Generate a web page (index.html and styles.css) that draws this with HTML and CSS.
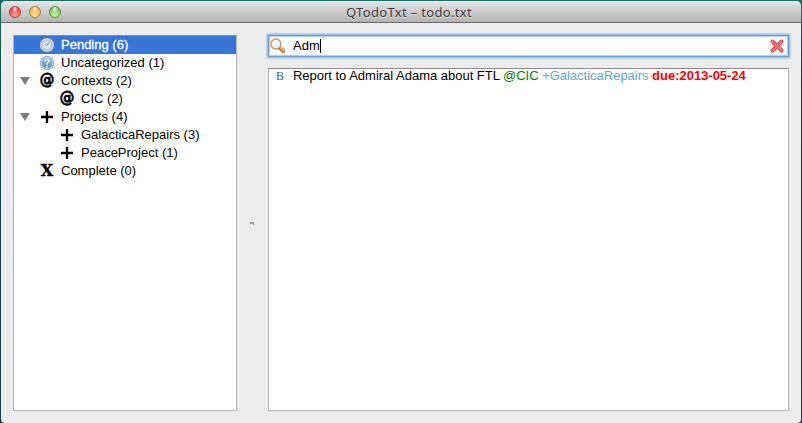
FILE: index.html
```html
<!DOCTYPE html>
<html lang="en">
<head>
<meta charset="utf-8">
<title>QTodoTxt – todo.txt</title>
<link rel="stylesheet" href="styles.css">
</head>
<body>
<svg class="defs" width="0" height="0">
  <defs>
    <linearGradient id="blue" x1="0" y1="0" x2="0" y2="1"><stop offset="0" stop-color="#9fc0e6"/><stop offset="1" stop-color="#5486c2"/></linearGradient>
    <symbol id="plus" viewBox="0 0 16 16"><path d="M8 2v12M2 8h12" stroke="#000" stroke-width="2.3" fill="none"/></symbol>
  </defs>
</svg>
<div class="window">
  <header class="titlebar">
    <div class="lights"><i class="light red"></i><i class="light amber"></i><i class="light green"></i></div>
    <h1 class="title">QTodoTxt – todo.txt</h1>
  </header>
  <main class="content">
    <ul class="tree">
      <li class="row selected"><span class="arrow"></span>
        <svg class="icon" viewBox="0 0 16 16"><circle cx="8" cy="8" r="6.3" fill="#bcd3ef" stroke="#d5d0c4" stroke-width="1.6"/><circle cx="8" cy="8" r="4.8" fill="#d5e5f8" stroke="#9dbce2" stroke-width=".8"/><path d="M6.2 7.2L7.8 8.7l2.2-3.2" fill="none" stroke="#6787b5" stroke-width="1"/></svg>
        <span class="label">Pending (6)</span></li>
      <li class="row"><span class="arrow"></span>
        <svg class="icon" viewBox="0 0 16 16"><circle cx="8" cy="8" r="6.8" fill="url(#blue)" stroke="#8eabd0" stroke-width=".8"/><circle cx="8" cy="8" r="5.8" fill="none" stroke="#d7e6f7" stroke-width=".8"/><path d="M5.9 6.5C6 3.7 10.2 3.9 10.1 6.3C10 7.7 8 7.7 8 9.4M8 10.7v1.7" fill="none" stroke="#fff" stroke-width="1.6"/></svg>
        <span class="label">Uncategorized (1)</span></li>
      <li class="row"><span class="arrow open"></span><span class="icon at">@</span><span class="label">Contexts (2)</span></li>
      <li class="row child"><span class="arrow"></span><span class="icon at">@</span><span class="label">CIC (2)</span></li>
      <li class="row"><span class="arrow open"></span><svg class="icon"><use href="#plus"/></svg><span class="label">Projects (4)</span></li>
      <li class="row child"><span class="arrow"></span><svg class="icon"><use href="#plus"/></svg><span class="label">GalacticaRepairs (3)</span></li>
      <li class="row child"><span class="arrow"></span><svg class="icon"><use href="#plus"/></svg><span class="label">PeaceProject (1)</span></li>
      <li class="row"><span class="arrow"></span><span class="icon cross">X</span><span class="label">Complete (0)</span></li>
    </ul>
    <div class="splitter"><svg width="6" height="5" viewBox="0 0 6 5"><path d="M1 3.2Q2 .8 4 1.8L5 3.6" fill="none" stroke="#858585" stroke-width="1.3"/></svg></div>
    <section class="tasks">
      <div class="search">
        <svg class="lens" viewBox="0 0 16 16"><path d="M9.8 9.8l3.5 3.4" stroke="#ad7135" stroke-width="3.8" stroke-linecap="round"/><path d="M10.7 9.8l2.7 2.7" stroke="#e9b879" stroke-width="1.8" stroke-linecap="round"/><circle cx="5.9" cy="6" r="5" fill="#e5f0fc" stroke="#cb9964" stroke-width="1.4"/><path d="M3.2 6Q3.7 3.4 6.3 3.3" fill="none" stroke="#fff" stroke-width="1.4"/></svg>
        <span class="query">Adm</span><i class="caret"></i>
        <svg class="clear" viewBox="0 0 16 16"><path d="M3.5 3.5l9 9M12.5 3.5l-9 9" stroke="#d4474b" stroke-width="4" stroke-linecap="round"/><path d="M3.5 3.5l9 9M12.5 3.5l-9 9" stroke="#f56a6c" stroke-width="2.5" stroke-linecap="round"/></svg>
      </div>
      <div class="list">
        <div class="task"><span class="priority">B</span><span class="text">Report to Admiral Adama about FTL <span class="context">@CIC</span> <span class="project">+GalacticaRepairs</span> <b class="due">due:2013-05-24</b></span></div>
      </div>
    </section>
  </main>
</div>
</body>
</html>
```
FILE: styles.css
```css
* { box-sizing: border-box; }
body {
  margin: 0;
  height: 423px;
  padding: 1px 1px 0;
  overflow: hidden;
  background: linear-gradient(#14735f, #0b4a43 18%, #173c4c 60%, #203c50);
  font: 13px/18px "Liberation Sans", Arial, sans-serif;
  color: #000;
}
.defs { position: absolute; }
.window {
  height: 422px;
  display: flex;
  flex-direction: column;
  overflow: hidden;
  border-radius: 5px 5px 4px 4px;
  background: #ececec;
}
.titlebar {
  height: 22px;
  flex: none;
  display: grid;
  grid-template-columns: 60px 1fr 60px;
  align-items: center;
  border-top: 1px solid #f5f5f5;
  border-bottom: 1px solid #686868;
  background: linear-gradient(#e4e4e4, #b3b3b3);
}
.lights { display: flex; gap: 8px; padding-left: 8px; }
.light {
  width: 12px;
  height: 12px;
  border-radius: 50%;
  border: 1px solid;
}
.red { border-color: #a5433f; background: radial-gradient(ellipse at 50% 10%, #fbd5d3 0 8%, transparent 40%), radial-gradient(circle at 50% 90%, #ffa49c, #e8494b 75%); }
.amber { border-color: #a8732e; background: radial-gradient(ellipse at 50% 10%, #fdeccb 0 8%, transparent 40%), radial-gradient(circle at 50% 90%, #ffe99a, #f0ae50 75%); }
.green { border-color: #4f843d; background: radial-gradient(ellipse at 50% 10%, #e0f3d6 0 8%, transparent 40%), radial-gradient(circle at 50% 90%, #cdf5a6, #80c067 75%); }
.title {
  margin: 0;
  padding-left: 16px;
  text-align: center;
  font: 13px/18px "Noto Sans", "Open Sans", sans-serif;
  letter-spacing: .33px;
  color: #3c3c3c;
  text-shadow: 0 1px 0 #e2e2e2;
}
.content { flex: 1; display: flex; padding: 12px; min-height: 0; }
.tree, .list {
  background: #fff;
  border: 1px solid #b4b4b4;
  border-top-color: #8c8c8c;
}
.tree { width: 224px; margin: 0; padding: 0; list-style: none; }
.row { height: 18px; display: flex; align-items: center; white-space: nowrap; }
.child { padding-left: 20px; }
.selected { background: #3875d7; color: #fff; }
.selected .label { -webkit-text-stroke: .3px #fff; }
.arrow { width: 25px; flex: none; display: flex; }
.open::before {
  content: "";
  margin-left: 6px;
  border: solid transparent;
  border-width: 8px 5px 0;
  border-top-color: #808080;
}
.icon { width: 16px; height: 16px; flex: none; margin-right: 6px; }
.at { font: bold 15px/14px "DejaVu Sans", sans-serif; text-align: center; -webkit-text-stroke: .5px #000; }
.cross { font: bold 16px/16px "DejaVu Serif", serif; text-align: center; -webkit-text-stroke: .4px #000; }
.splitter { width: 31px; display: flex; align-items: center; justify-content: center; padding-right: 1px; }
.tasks { flex: 1; display: flex; flex-direction: column; gap: 11px; min-width: 0; }
.search {
  height: 22px;
  display: flex;
  align-items: center;
  padding: 0 3px 0 1px;
  border: 1px solid #6e9fce;
  background: #fff;
  box-shadow: 0 0 2px 1px #78acdd, inset 0 0 1px 1px #a9cbea;
}
.lens { width: 16px; height: 16px; margin-right: 7px; }
.caret { width: 1px; height: 14px; background: #000; }
.clear { width: 16px; height: 16px; margin-left: auto; }
.list { flex: 1; }
.task { height: 14px; display: flex; align-items: center; padding-left: 7px; white-space: nowrap; }
.text { letter-spacing: -.015px; }
.priority { width: 17px; font: 12px/14px "Liberation Serif", serif; color: #2f7a35; }
.context { color: #008000; }
.project { color: #64aad0; }
.due { color: #f00; }
```
